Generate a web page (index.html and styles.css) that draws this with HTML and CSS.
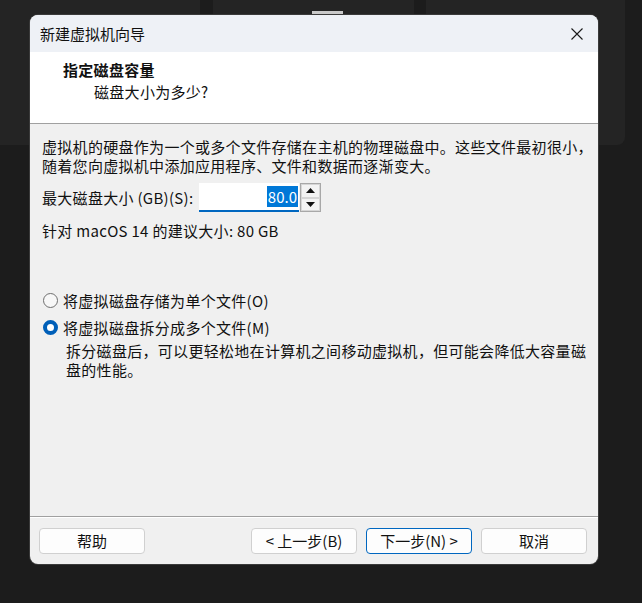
FILE: index.html
```html
<!DOCTYPE html>
<html lang="zh-CN">
<head>
<meta charset="utf-8">
<title>新建虚拟机向导</title>
<link rel="stylesheet" href="styles.css">
</head>
<body>
<div class="desk">
  <div class="panel panel-a"></div>
  <div class="panel panel-b"><span class="grip"></span></div>
  <div class="panel panel-c"></div>

  <div class="dialog">
    <div class="titlebar">
      <span class="title">新建虚拟机向导</span>
      <svg class="close" width="12" height="12" viewBox="0 0 12 12"><path d="M0.5 0.5 L11.5 11.5 M11.5 0.5 L0.5 11.5" stroke="#1a1a1a" stroke-width="1.1" fill="none"/></svg>
    </div>
    <div class="header">
      <div class="h-title">指定磁盘容量</div>
      <div class="h-sub">磁盘大小为多少?</div>
    </div>
    <div class="content">
      <p class="para">虚拟机的硬盘作为一个或多个文件存储在主机的物理磁盘中。这些文件最初很小，<br>随着您向虚拟机中添加应用程序、文件和数据而逐渐变大。</p>
      <div class="size-row">
        <span class="label">最大磁盘大小 (GB)(S):</span>
        <div class="spin-input">
          <div class="field"><span class="sel">80.0</span></div>
          <div class="spin">
            <span class="spin-btn"><svg width="9" height="5" viewBox="0 0 9 5"><path d="M0 5 L4.5 0 L9 5 Z" fill="#111"/></svg></span>
            <span class="spin-btn"><svg width="9" height="5" viewBox="0 0 9 5"><path d="M0 0 L4.5 5 L9 0 Z" fill="#111"/></svg></span>
          </div>
        </div>
      </div>
      <p class="rec">针对 macOS 14 的建议大小: 80 GB</p>
      <div class="radio-row first">
        <span class="radio"></span>
        <span class="r-label">将虚拟磁盘存储为单个文件(O)</span>
      </div>
      <div class="radio-row second">
        <span class="radio checked"></span>
        <span class="r-label">将虚拟磁盘拆分成多个文件(M)</span>
      </div>
      <p class="desc">拆分磁盘后，可以更轻松地在计算机之间移动虚拟机，但可能会降低大容量磁<br>盘的性能。</p>
    </div>
    <div class="footer">
      <button class="btn">帮助</button>
      <div class="spacer"></div>
      <button class="btn">&lt; 上一步(B)</button>
      <button class="btn primary">下一步(N) &gt;</button>
      <button class="btn">取消</button>
    </div>
  </div>
</div>
</body>
</html>
```
FILE: styles.css
```css
html, body {
  margin: 0;
  padding: 0;
  background: #1c1c1c;
}
body {
  font-family: "Noto Sans CJK SC", "Noto Sans", sans-serif;
  font-size: 15px;
  color: #111;
}
.desk {
  position: relative;
  width: 642px;
  height: 603px;
  overflow: hidden;
}
.panel {
  position: absolute;
  top: 0;
  height: 145px;
  background: #242424;
  border-radius: 0 0 8px 8px;
}
.panel-a { left: -8px; width: 208px; }
.panel-b { left: 213px; width: 201px; }
.panel-c { left: 426px; width: 199px; }
.grip {
  position: absolute;
  left: 99px;
  top: 11px;
  width: 31px;
  height: 5px;
  background: #c9c9c9;
}
.dialog {
  position: absolute;
  left: 30px;
  top: 15px;
  width: 568px;
  height: 549px;
  border-radius: 8px;
  overflow: hidden;
  background: #f0f0f0;
  display: flex;
  flex-direction: column;
  box-shadow: 0 0 0 1px #3a3a3a;
}
.titlebar {
  height: 37px;
  flex: none;
  background: #eef1f6;
  display: flex;
  align-items: center;
  justify-content: space-between;
  padding: 0 15px 0 10px;
}
.title {
  line-height: 19px;
}
.close { display: block; }
.header {
  height: 72px;
  flex: none;
  background: #fff;
  border-bottom: 1px solid #a0a0a0;
  box-sizing: border-box;
  padding-top: 8px;
}
.h-title {
  margin-left: 33px;
  font-weight: bold;
  line-height: 20px;
  letter-spacing: 0.3px;
}
.h-sub {
  margin-left: 64px;
  margin-top: 2px;
  line-height: 20px;
  letter-spacing: 0.3px;
}
.content {
  flex: 1;
  padding: 13px 12px 0 12px;
  white-space: nowrap;
  letter-spacing: 0.3px;
}
.para {
  margin: 0;
  line-height: 19px;
}
.size-row {
  display: flex;
  align-items: center;
  margin-top: 8px;
  height: 29px;
}
.label {
  width: 157px;
  line-height: 19px;
}
.spin-input {
  display: flex;
  height: 29px;
}
.field {
  width: 100px;
  height: 29px;
  box-sizing: border-box;
  background: #fff;
  border-bottom: 2px solid #0067c0;
  display: flex;
  align-items: center;
  justify-content: flex-end;
  padding-right: 1px;
}
.sel {
  background: #0078d7;
  color: #fff;
  line-height: 21px;
  padding: 0 1px;
  letter-spacing: 0;
}
.spin {
  display: flex;
  flex-direction: column;
  width: 21px;
  margin-left: 1px;
  border: 1px solid #a8a8a8;
  box-sizing: border-box;
  background: #f0f0f0;
}
.spin-btn {
  flex: 1;
  display: flex;
  align-items: center;
  justify-content: center;
  border: 1px solid #d6d6d6;
  background: #f3f3f3;
}
.spin-btn svg { display: block; }
.rec {
  margin: 9px 0 0 0;
  line-height: 19px;
}
.radio-row {
  display: flex;
  align-items: center;
  height: 19px;
}
.radio-row.first { margin-top: 51px; }
.radio-row.second { margin-top: 8px; }
.radio {
  width: 15px;
  height: 15px;
  box-sizing: border-box;
  border-radius: 50%;
  border: 1px solid #6e6e6e;
  background: #f7f7f7;
  margin-left: 1px;
  margin-right: 5px;
  flex: none;
}
.radio.checked {
  border: 4.5px solid #005fb8;
  background: #fff;
}
.r-label {
  line-height: 19px;
}
.desc {
  margin: 4px 0 0 24px;
  line-height: 19px;
}
.footer {
  flex: none;
  height: 48px;
  border-top: 1px solid #a0a0a0;
  box-shadow: inset 0 1px 0 #fff;
  box-sizing: border-box;
  display: flex;
  align-items: flex-start;
  padding: 11px 11px 0 9px;
  gap: 9px;
}
.spacer { flex: 1; }
.btn {
  width: 106px;
  height: 26px;
  box-sizing: border-box;
  border: 1px solid #d0d0d0;
  border-radius: 4px;
  background: #fdfdfd;
  font-family: "Noto Sans CJK SC", "Noto Sans", sans-serif;
  font-size: 15px;
  color: #111;
  padding: 0;
  line-height: 22px;
}
.btn.primary {
  border-color: #0067c0;
}
```
